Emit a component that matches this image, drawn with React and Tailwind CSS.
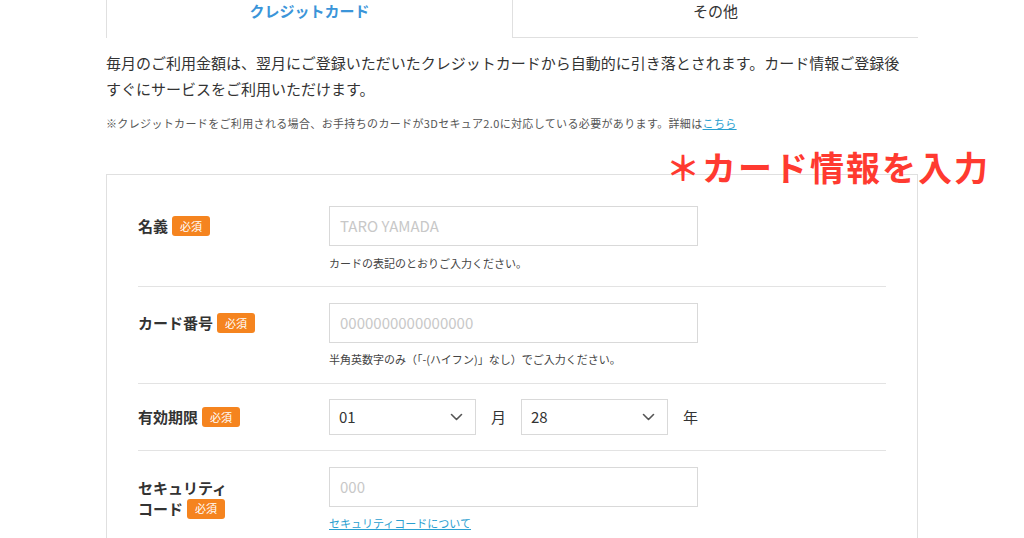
const font = { fontFamily: '"Noto Sans CJK JP", "Noto Sans", sans-serif' };

function Badge() {
  return (
    <span className="ml-[4px] inline-flex h-[20px] w-[38px] items-center justify-center rounded-[3px] bg-[#f5841f] text-[11px] font-normal leading-none text-white">
      必須
    </span>
  );
}

function Chevron() {
  return (
    <svg width="13" height="8" viewBox="0 0 13 8" fill="none" stroke="#555" strokeWidth="1.6" strokeLinecap="round" strokeLinejoin="round">
      <path d="M1.5 1.5l5 5 5-5" />
    </svg>
  );
}

function Select({ value }) {
  return (
    <div className="flex h-[36px] w-[147px] items-center justify-between border border-[#d9d9d9] bg-white pl-[9px] pr-[12px] text-[15px] text-[#333]">
      <span>{value}</span>
      <Chevron />
    </div>
  );
}

function TextInput({ placeholder }) {
  return (
    <div className="flex h-[40px] w-[369px] items-center border border-[#d9d9d9] bg-white px-[10px] text-[15px] text-[#c8c8c8]">
      {placeholder}
    </div>
  );
}

function Row({ label, children, last }) {
  return (
    <div className={`flex items-start ${last ? '' : 'border-b border-[#e3e3e3]'}`}>
      <div className="flex h-[40px] w-[191px] shrink-0 items-center text-[15px] font-bold text-[#333]">{label}</div>
      <div className="flex-1">{children}</div>
    </div>
  );
}

export default function App() {
  return (
    <div className="relative h-[538px] w-[1024px] overflow-hidden bg-white text-[#333]" style={font}>
      {/* tabs */}
      <div className="mx-[106px] flex h-[38px]">
        <div className="flex h-full w-[406px] justify-center border-l border-[#e0e0e0] text-[15px] font-bold leading-[22px] text-[#3b95d9]">
          クレジットカード
        </div>
        <div className="flex h-full flex-1 justify-center border-b border-l border-[#e0e0e0] text-[15px] leading-[22px] text-[#333]">
          その他
        </div>
      </div>

      <div className="mx-[106px] mt-[12px]">
        <p className="text-[15px] leading-[26px] text-[#333]">
          毎月のご利用金額は、翌月にご登録いただいたクレジットカードから自動的に引き落とされます。カード情報ご登録後
          <br />
          すぐにサービスをご利用いただけます。
        </p>
        <p className="mt-[13px] text-[11px] leading-[16px] tracking-[0.35px] text-[#555]">
          ※クレジットカードをご利用される場合、お手持ちのカードが3Dセキュア2.0に対応している必要があります。詳細は
          <span className="text-[#2aa0d0] underline">こちら</span>
        </p>
      </div>

      {/* form box */}
      <div className="mx-[106px] mt-[43px] border border-[#e0e0e0] px-[31px] pt-[31px]">
        <Row label={<>名義<Badge /></>}>
          <TextInput placeholder="TARO YAMADA" />
          <p className="mt-[9px] pb-[15px] text-[11px] leading-[16px] text-[#444]">カードの表記のとおりご入力ください。</p>
        </Row>
        <div className="flex border-b border-[#e3e3e3] pt-[16px]">
          <div className="flex h-[40px] w-[191px] shrink-0 items-center text-[15px] font-bold text-[#333]">
            カード番号<Badge />
          </div>
          <div className="flex-1">
            <TextInput placeholder="0000000000000000" />
            <p className="mt-[8px] pb-[16px] text-[11px] leading-[16px] text-[#444]">
              半角英数字のみ（「-(ハイフン)」なし）でご入力ください。
            </p>
          </div>
        </div>
        <div className="flex items-center border-b border-[#e3e3e3] py-[15px]">
          <div className="flex w-[191px] shrink-0 items-center text-[15px] font-bold text-[#333]">
            有効期限<Badge />
          </div>
          <div className="flex items-center">
            <Select value="01" />
            <span className="mx-[15px] text-[15px] text-[#333]">月</span>
            <Select value="28" />
            <span className="ml-[15px] text-[15px] text-[#333]">年</span>
          </div>
        </div>
        <div className="flex pt-[16px]">
          <div className="w-[191px] shrink-0 pt-[10px] text-[15px] font-bold leading-[21px] text-[#333]">
            セキュリティ
            <br />
            <span className="inline-flex items-center">コード<Badge /></span>
          </div>
          <div className="flex-1">
            <TextInput placeholder="000" />
            <p className="mt-[8px] text-[11px] leading-[16px] text-[#2aa0d0] underline">セキュリティコードについて</p>
          </div>
        </div>
        <div className="h-[40px]" />
      </div>

      {/* annotation */}
      <div className="absolute left-[666px] top-[146px] text-[34px] font-bold leading-[42px] tracking-[2px] text-[#ff3a30]">
        ＊カード情報を入力
      </div>
    </div>
  );
}
